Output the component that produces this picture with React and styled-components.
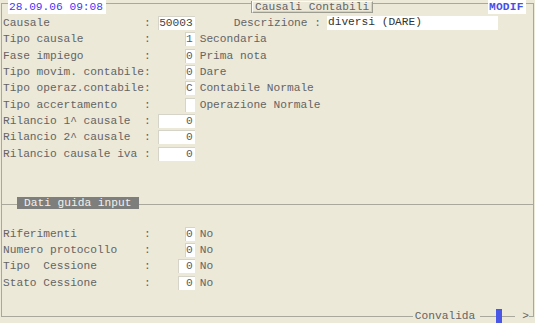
import React from 'react';
import styled, { createGlobalStyle } from 'styled-components';

const LINE = '#a9a89c';
const BG = '#ece9d8';
const TEXT = '#646464';

const Global = createGlobalStyle`
  html, body { margin: 0; padding: 0; background: ${BG}; }
  body {
    font-family: "Liberation Mono", "Courier New", monospace;
    font-size: 11.2px;
    color: ${TEXT};
  }
  * { box-sizing: border-box; }
`;

const Screen = styled.div`
  width: 535px;
  height: 323px;
  padding: 0 1px;
  display: flex;
  flex-direction: column;
  overflow: hidden;
`;

/* ---------- header ---------- */
const Header = styled.div`
  display: flex;
  align-items: flex-start;
  height: 14px;
  flex: none;
`;

const TopRule = styled.div`
  flex: ${p => (p.$w ? `0 0 ${p.$w}px` : '1 1 0')};
  margin-top: 3px;
  height: 11px;
  border-top: 1px solid ${LINE};
  border-left: ${p => (p.$left ? `1px solid ${LINE}` : 'none')};
  border-right: ${p => (p.$right ? `1px solid ${LINE}` : 'none')};
`;

const DateBox = styled.div`
  flex: none;
  width: 98px;
  height: 14px;
  line-height: 14px;
  padding-left: 1px;
  background: #fff;
  color: #3b3bf5;
`;

const TitleBox = styled.div`
  flex: none;
  width: 121px;
  height: 12px;
  margin-top: 1px;
  line-height: 10px;
  padding-left: 2px;
  border: 1px solid #9d9c91;
  border-top-color: #fbfbf7;
  border-left-color: #fbfbf7;
  box-shadow: inset -1px -1px 0 #d3d1c4, -1px 0 0 #9d9c91;
  color: ${TEXT};
  white-space: pre;
`;

const ModeBox = styled.div`
  flex: none;
  width: 38px;
  height: 14px;
  line-height: 14px;
  padding-left: 1px;
  background: #fff;
  color: #4650ea;
  font-weight: bold;
  letter-spacing: 0.2px;
`;

/* ---------- frame ---------- */
const Frame = styled.div`
  flex: 1 1 auto;
  display: flex;
  flex-direction: column;
  border-left: 1px solid ${LINE};
  border-right: 1px solid ${LINE};
  padding-left: 1px;
`;

const Grid = styled.div`
  display: flex;
  flex-direction: column;
  margin-top: ${p => p.$top}px;
`;

const Row = styled.div`
  display: flex;
  align-items: center;
  height: 16.3px;
  white-space: pre;
`;

const Label = styled.span`
  flex: none;
  width: 21ch;
`;

const Colon = styled.span`
  flex: none;
  width: 1ch;
`;

const FieldCell = styled.div`
  flex: none;
  width: 44px;
  display: flex;
  justify-content: flex-end;
`;

const Box = styled.div`
  width: calc(${p => p.$chars}ch + 3px);
  height: 14px;
  line-height: 13px;
  background: #fff;
  border-left: 1px solid #d6d4c9;
  border-top: 1px solid #d6d4c9;
  padding-right: 2px;
  text-align: right;
  color: ${p => (p.$dark ? '#454545' : '#5c5c5c')};
`;

const Desc = styled.span`
  margin-left: 5px;
`;

const DescLabel = styled.span`
  margin-left: 39px;
`;

const WideBox = styled.div`
  width: 171px;
  height: 14px;
  line-height: 13px;
  margin-left: 6px;
  padding-left: 1px;
  background: #fff;
  color: #333;
`;

/* ---------- section bar ---------- */
const SectionBar = styled.div`
  display: flex;
  align-items: flex-start;
  height: 12px;
  margin-top: 35px;
  margin-left: -1px;
`;

const SectionRule = styled.div`
  flex: ${p => (p.$w ? `0 0 ${p.$w}px` : '1 1 0')};
  height: 8px;
  border-bottom: 1px solid ${LINE};
`;

const SectionLabel = styled.div`
  flex: none;
  width: 122px;
  height: 12px;
  line-height: 12px;
  padding-left: 7px;
  background: #7e7e7c;
  color: #f0f0ec;
  white-space: pre;
`;

/* ---------- footer ---------- */
const Footer = styled.div`
  flex: none;
  height: 15px;
  display: flex;
  align-items: flex-start;
`;

const FootRule = styled.div`
  flex: ${p => (p.$w ? `0 0 ${p.$w}px` : '1 1 0')};
  height: 9px;
  border-bottom: 1px solid ${LINE};
  border-left: ${p => (p.$left ? `1px solid ${LINE}` : 'none')};
  border-right: ${p => (p.$right ? `1px solid ${LINE}` : 'none')};
`;

const FootText = styled.span`
  flex: none;
  height: 15px;
  line-height: 17px;
  padding: ${p => p.$pad || '0'};
  white-space: pre;
`;

const Cursor = styled.div`
  flex: none;
  width: 6px;
  height: 14px;
  margin-top: 1px;
  background: #4a56e6;
`;

const topRows = [
  { label: 'Tipo causale', chars: 1, value: '1', desc: 'Secondaria' },
  { label: 'Fase impiego', chars: 1, value: '0', desc: 'Prima nota' },
  { label: 'Tipo movim. contabile', chars: 1, value: '0', desc: 'Dare' },
  { label: 'Tipo operaz.contabile', chars: 1, value: 'C', desc: 'Contabile Normale' },
  { label: 'Tipo accertamento', chars: 1, value: '', desc: 'Operazione Normale' },
  { label: 'Rilancio 1^ causale', chars: 5, value: '0' },
  { label: 'Rilancio 2^ causale', chars: 5, value: '0' },
  { label: 'Rilancio causale iva', chars: 5, value: '0' },
];

const bottomRows = [
  { label: 'Riferimenti', chars: 1, value: '0', desc: 'No' },
  { label: 'Numero protocollo', chars: 1, value: '0', desc: 'No' },
  { label: 'Tipo  Cessione', chars: 2, value: '0', desc: 'No' },
  { label: 'Stato Cessione', chars: 2, value: '0', desc: 'No' },
];

function Field({ label, chars, value, desc }) {
  return (
    <Row>
      <Label>{label}</Label>
      <Colon>:</Colon>
      <FieldCell>
        <Box $chars={chars}>{value}</Box>
      </FieldCell>
      {desc && <Desc>{desc}</Desc>}
    </Row>
  );
}

export default function App() {
  return (
    <>
      <Global />
      <Screen>
        <Header>
          <TopRule $w={7} $left />
          <DateBox>28.09.06 09:08</DateBox>
          <TopRule $w={146} />
          <TitleBox>Causali Contabili</TitleBox>
          <TopRule />
          <ModeBox>MODIF</ModeBox>
          <TopRule $w={8} $right />
        </Header>
        <Frame>
          <Grid $top={1}>
            <Row>
              <Label>Causale</Label>
              <Colon>:</Colon>
              <FieldCell>
                <Box $chars={5} $dark>50003</Box>
              </FieldCell>
              <DescLabel>Descrizione :</DescLabel>
              <WideBox>diversi (DARE)</WideBox>
            </Row>
            {topRows.map(r => (
              <Field key={r.label} {...r} />
            ))}
          </Grid>
          <SectionBar>
            <SectionRule $w={15} />
            <SectionLabel>Dati guida input</SectionLabel>
            <SectionRule />
          </SectionBar>
          <Grid $top={17}>
            {bottomRows.map(r => (
              <Field key={r.label} {...r} />
            ))}
          </Grid>
        </Frame>
        <Footer>
          <FootRule $left />
          <FootText $pad="0 5px 0 2px">Convalida</FootText>
          <FootRule $w={16} />
          <Cursor />
          <FootRule $w={13} />
          <FootText $pad="0 0 0 7px">&gt;</FootText>
          <FootRule $w={5} $right />
        </Footer>
      </Screen>
    </>
  );
}
